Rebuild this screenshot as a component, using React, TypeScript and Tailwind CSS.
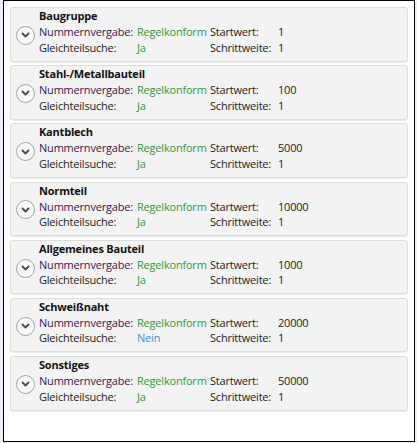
const items = [
  { title: 'Baugruppe', start: '1', same: 'Ja' },
  { title: 'Stahl-/Metallbauteil', start: '100', same: 'Ja' },
  { title: 'Kantblech', start: '5000', same: 'Ja' },
  { title: 'Normteil', start: '10000', same: 'Ja' },
  { title: 'Allgemeines Bauteil', start: '1000', same: 'Ja' },
  { title: 'Schweißnaht', start: '20000', same: 'Nein' },
  { title: 'Sonstiges', start: '50000', same: 'Ja' },
];

function ExpandIcon() {
  return (
    <div className="flex h-[19px] w-[19px] items-center justify-center rounded-full border border-[#a3a3a3] bg-[#f8f8f8]">
      <svg width="9" height="6" viewBox="0 0 9 6" fill="none">
        <path d="M1.5 1.5 L4.5 4.5 L7.5 1.5" stroke="#4a4a4a" strokeWidth="1.8" strokeLinecap="round" strokeLinejoin="round" />
      </svg>
    </div>
  );
}

export default function App() {
  return (
    <div className="h-[443px] w-[417px] bg-[#e9eef7] pl-[3px]" style={{ fontFamily: '"Open Sans", "Noto Sans", sans-serif' }}>
      <div className="flex h-[442px] w-[412px] flex-col gap-[3.7px] border border-black bg-white px-[6px] pt-[6px]">
        {items.map(item => (
          <div
            key={item.title}
            className="flex h-[54.5px] items-center rounded-[3px] border border-[#dddddd] bg-[#f3f3f3] shadow-[0_1px_1px_rgba(0,0,0,0.08)]"
          >
            <div className="flex w-[28px] justify-center pl-[1px] pt-[2px]">
              <ExpandIcon />
            </div>
            <div className="flex-1 self-start text-[11px] tracking-[-0.2px] whitespace-nowrap text-[#222]">
              <div className="leading-[16px] font-bold text-[#111]">{item.title}</div>
              <div className="grid grid-cols-[98px_73px_68px_1fr] leading-[15.5px]">
                <span className="text-[#3d1550]">Nummernvergabe:</span>
                <span className="text-[#2f9a3c]">Regelkonform</span>
                <span>Startwert:</span>
                <span>{item.start}</span>
                <span>Gleichteilsuche:</span>
                <span className={item.same === 'Nein' ? 'text-[#3b93e3]' : 'text-[#2f9a3c]'}>{item.same}</span>
                <span>Schrittweite:</span>
                <span>1</span>
              </div>
            </div>
          </div>
        ))}
      </div>
    </div>
  );
}
